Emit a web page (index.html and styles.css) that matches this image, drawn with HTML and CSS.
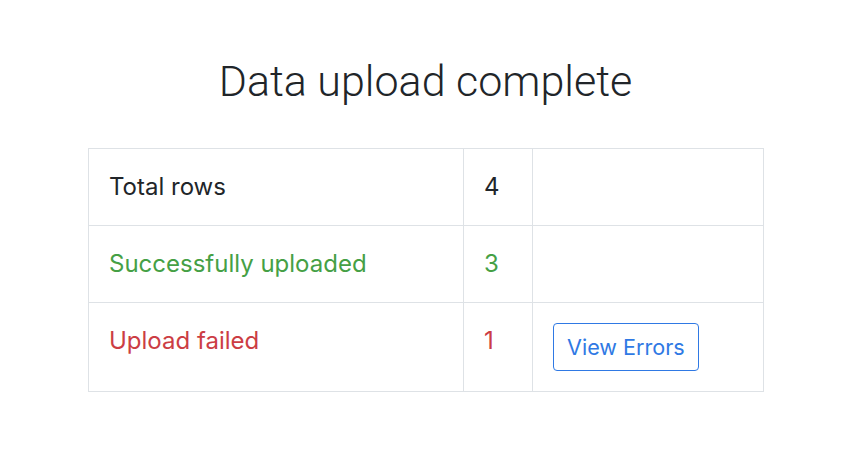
FILE: index.html
```html
<!DOCTYPE html>
<html>
<head>
<meta charset="utf-8">
<link rel="stylesheet" href="styles.css">
</head>
<body>
<main class="page">
  <h1 class="title">Data upload complete</h1>
  <table class="summary">
    <colgroup>
      <col class="c-label">
      <col class="c-count">
      <col class="c-action">
    </colgroup>
    <tr>
      <td>Total rows</td>
      <td>4</td>
      <td></td>
    </tr>
    <tr class="ok">
      <td>Successfully uploaded</td>
      <td>3</td>
      <td></td>
    </tr>
    <tr class="fail">
      <td>Upload failed</td>
      <td>1</td>
      <td><button class="btn-outline">View Errors</button></td>
    </tr>
  </table>
</main>
</body>
</html>
```
FILE: styles.css
```css
* { box-sizing: border-box; }
html, body { margin: 0; background: #fff; }
body {
  font-family: Inter, "Noto Sans", "Liberation Sans", sans-serif;
  color: #212529;
}
.page {
  padding: 54px 81px 0 88px;
  display: flex;
  flex-direction: column;
  align-items: stretch;
}
.title {
  margin: 0 0 40px;
  font-family: Roboto, Inter, sans-serif;
  font-size: 43px;
  font-weight: 300;
  line-height: 54px;
  text-align: center;
  color: #212529;
}
.summary {
  width: 675px;
  border-collapse: collapse;
  table-layout: fixed;
}
.c-label { width: 375px; }
.c-count { width: 69px; }
.c-action { width: 231px; }
.summary td {
  border: 1px solid #dee2e6;
  padding: 20px;
  font-size: 24px;
  line-height: 36px;
  vertical-align: top;
}
.ok td { color: #45a045; }
.fail td { color: #cc3d44; }
.btn-outline {
  font-family: inherit;
  font-size: 21.6px;
  line-height: 36px;
  color: #2f79e4;
  background: #fff;
  border: 1px solid #2f79e4;
  border-radius: 4px;
  padding: 5px 13px;
  cursor: pointer;
}
```
